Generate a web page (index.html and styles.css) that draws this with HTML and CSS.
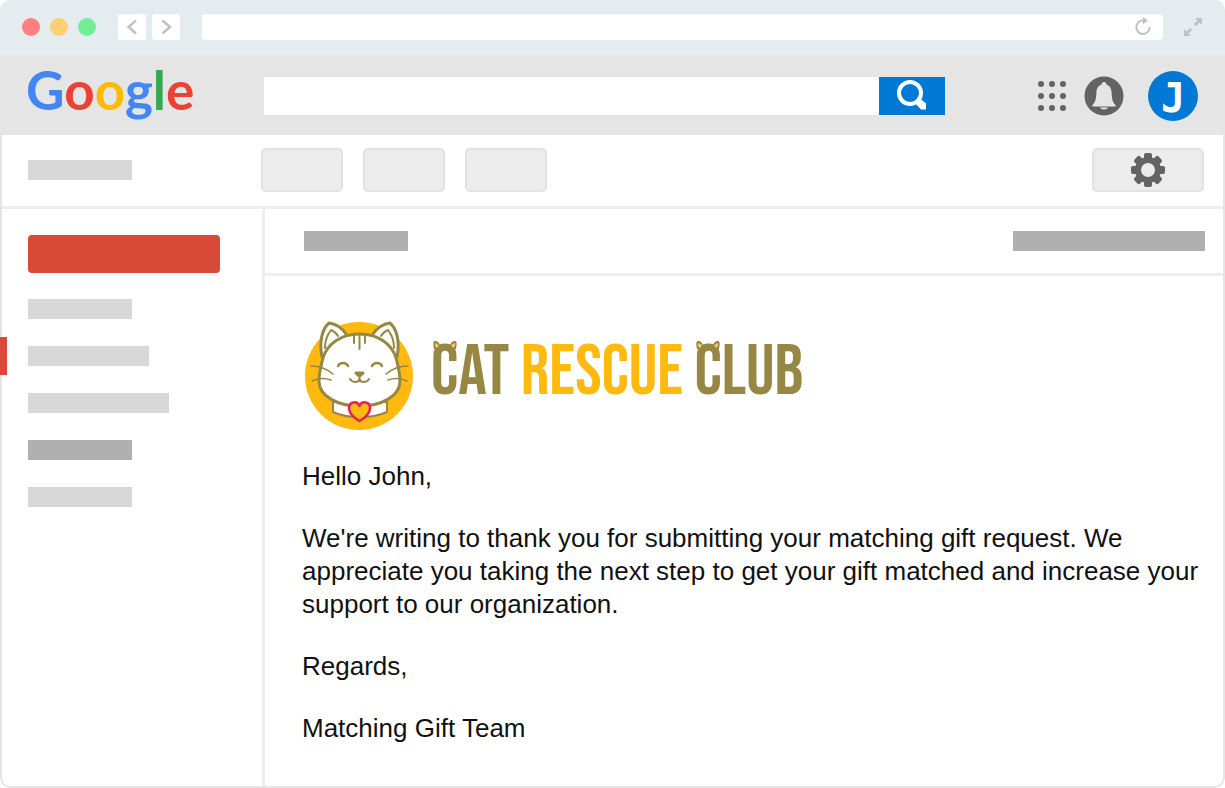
FILE: index.html
```html
<!DOCTYPE html>
<html lang="en">
<head>
  <meta charset="UTF-8">
  <meta name="viewport" content="width=device-width, initial-scale=1">
  <title>Cat Rescue Club</title>
  <link rel="stylesheet" href="styles.css">
</head>
<body>
  <div class="browser">
    <div class="browser-bar">
      <div class="dots">
        <span class="dot red"></span>
        <span class="dot yellow"></span>
        <span class="dot green"></span>
      </div>
      <div class="history">
        <button type="button" aria-label="Back">
          <svg width="28" height="28" viewBox="0 0 28 28"><path d="M18 7.500L10.500 14l7.500 6.500"/></svg>
        </button>
        <button type="button" aria-label="Forward">
          <svg width="28" height="28" viewBox="0 0 28 28"><path d="M10.500 7.500L18 14l-7.500 6.500"/></svg>
        </button>
      </div>
      <div class="address">
        <input type="text" aria-label="Address">
        <button type="button" aria-label="Reload">
          <svg width="20" height="20" viewBox="0 0 20 20"><path d="M10.500 3.600A6.700 6.700 0 1 0 16.700 10" fill="none" stroke="#bcc3c6" stroke-width="2"/><path d="M10 0l5 3.500-5 4z" fill="#bcc3c6"/></svg>
        </button>
      </div>
      <button type="button" class="expand" aria-label="Full screen">
        <svg width="20" height="20" viewBox="0 0 20 20"><path d="M12 1h7v7l-2.500-2.500-3.800 3.800-2-2 3.800-3.800zM8 19H1v-7l2.500 2.500 3.800-3.800 2 2-3.800 3.800z" fill="#bcc3c6"/></svg>
      </button>
    </div>

    <header class="header">
      <a href="#" class="google"><span class="b">G</span><span class="r">o</span><span class="y">o</span><span class="b">g</span><span class="g">l</span><span class="r">e</span></a>
      <form class="search">
        <input type="search" aria-label="Search">
        <button type="submit" aria-label="Search">
          <svg width="32" height="32" viewBox="0 0 32 32"><circle cx="14" cy="13" r="11" fill="none" stroke="#fff" stroke-width="4"/><path d="M19 23l4.500-5 6.500 5.500v6h-5z" fill="#fff"/></svg>
        </button>
      </form>
      <div class="account">
        <button type="button" class="apps" aria-label="Apps">
          <svg width="30" height="34" viewBox="0 0 30 34" fill="#636363">
            <circle cx="4" cy="5" r="3"/><circle cx="15" cy="5" r="3"/><circle cx="26" cy="5" r="3"/>
            <circle cx="4" cy="17" r="3"/><circle cx="15" cy="17" r="3"/><circle cx="26" cy="17" r="3"/>
            <circle cx="4" cy="29" r="3"/><circle cx="15" cy="29" r="3"/><circle cx="26" cy="29" r="3"/>
          </svg>
        </button>
        <button type="button" class="bell" aria-label="Notifications">
          <svg width="40" height="40" viewBox="0 0 40 40"><circle cx="20" cy="20" r="19.500" fill="#636363"/><path d="M20 6c1.500 0 2.400 1.200 2.400 2.500 3.600 1.200 5 4.200 5.200 8 .2 6 .8 9.500 3.900 12.500v1.500h-23V29c3.100-3 3.700-6.500 3.900-12.500.2-3.800 1.600-6.800 5.200-8C17.600 7.200 18.500 6 20 6zM16 31.500h8c-.8 2.600-7.200 2.600-8 0z" fill="#e5e5e5"/></svg>
        </button>
        <button type="button" class="avatar">J</button>
      </div>
    </header>

    <div class="mailbox">
      <div class="toolbar">
        <span class="bar short"></span>
        <div class="actions">
          <button type="button" aria-label="Archive"></button>
          <button type="button" aria-label="Delete"></button>
          <button type="button" aria-label="Move"></button>
        </div>
        <button type="button" class="settings" aria-label="Settings">
          <svg width="36" height="36" viewBox="0 0 36 36">
            <g fill="#636363">
              <rect x="14" y="1" width="8" height="34" rx="2"/>
              <rect x="14" y="1" width="8" height="34" rx="2" transform="rotate(45 18 18)"/>
              <rect x="14" y="1" width="8" height="34" rx="2" transform="rotate(90 18 18)"/>
              <rect x="14" y="1" width="8" height="34" rx="2" transform="rotate(135 18 18)"/>
              <circle cx="18" cy="18" r="13"/>
            </g>
            <circle cx="18" cy="18" r="7" fill="#ececec"/>
          </svg>
        </button>
      </div>

      <div class="columns">
        <nav class="sidebar">
          <button type="button" class="compose" aria-label="Compose"></button>
          <ul>
            <li><span class="bar short"></span></li>
            <li class="current"><span class="bar medium"></span></li>
            <li><span class="bar long"></span></li>
            <li><span class="bar short dark"></span></li>
            <li><span class="bar short"></span></li>
          </ul>
        </nav>

        <main class="message">
          <div class="message-top">
            <span class="bar short dark"></span>
            <span class="bar wide dark"></span>
          </div>
          <div class="message-body">
            <div class="club">
              <svg width="110" height="112" viewBox="0 0 110 112" fill="none" stroke="#978744" stroke-width="2" stroke-linecap="round" stroke-linejoin="round">
                <circle cx="54" cy="57" r="54" fill="#ffb90f" stroke="none"/>
                <!-- collar -->
                <path d="M28 83v10c15 7 38 7 54 0V83z" fill="#fff"/>
                <!-- ears -->
                <path d="M17 38C14 23 17 10 24 4c7 1 13 5 17 11M92 38C95 23 92 10 85 4c-7 1-13 5-17 11" fill="#fff" stroke-width="3"/>
                <path d="M20 29c0-8 2-13 6-18 3 1 5 3 7 6M89 29c0-8-2-13-6-18-3 1-5 3-7 6"/>
                <!-- head -->
                <path d="M54.500 15C36 15 22 25 18 39c-2 8-4 14-4 23 0 15 18 25 40.500 25S95 77 95 62c0-9-2-15-4-23C87 25 73 15 54.500 15z" fill="#fff" stroke-width="3"/>
                <path d="M49 16v8M54.500 16v14M60 16v8"/>
                <path d="M33 47c2-4 8-4 10 0M67 47c2-4 8-4 10 0" stroke-width="2.500"/>
                <path d="M51 54h7l-3.500 3z" fill="#978744" stroke-width="3"/>
                <path d="M54.500 58v2c-1 4-7 4-9.500 0M54.500 60c1 4 7 4 9.500 0"/>
                <path d="M6 47c8 0 16 3 22 8M7 62c6-3 13-3 19-1M103 47c-8 0-16 3-22 8M102 62c-6-3-13-3-19-1" stroke-width="1.500"/>
                <path d="M54.500 102c-7-4-10.500-8-10.500-13 0-6 8-8 10.500-2C57 81 65 83 65 89c0 5-3.500 9-10.500 13z" fill="#ffb90f" stroke="#e5205c" stroke-width="2.500"/>
              </svg>
              <h1><span class="eared">C<svg class="ears" width="24" height="9" viewBox="0 0 24 9"><path d="M1 9C0 4 0 1 2 1c3 0 4 2 5 4h10c1-2 2-4 5-4 2 0 2 3 1 8z" fill="#978744"/><path d="M2 6V3l4 2-2 3zM22 6V3l-4 2 2 3z" fill="#ffc95a"/></svg></span>AT <span class="gold">RESCUE</span> <span class="eared">C<svg class="ears" width="24" height="9" viewBox="0 0 24 9"><path d="M1 9C0 4 0 1 2 1c3 0 4 2 5 4h10c1-2 2-4 5-4 2 0 2 3 1 8z" fill="#978744"/><path d="M2 6V3l4 2-2 3zM22 6V3l-4 2 2 3z" fill="#ffc95a"/></svg></span>LUB</h1>
            </div>
            <p>Hello John,</p>
            <p>We're writing to thank you for submitting your matching gift request. We appreciate you taking the next step to get your gift matched and increase your support to our organization.</p>
            <p>Regards,</p>
            <p>Matching Gift Team</p>
          </div>
        </main>
      </div>
    </div>
  </div>
</body>
</html>
```

FILE: styles.css
```css
* {
  box-sizing: border-box;
}

body {
  margin: 0;
  font-family: "Liberation Sans", Arial, sans-serif;
  color: #111;
  background: #fff;
}

button {
  display: flex;
  align-items: center;
  justify-content: center;
  padding: 0;
  border: none;
  background: none;
  cursor: pointer;
}

input {
  border: none;
  outline: none;
  background: #fff;
}

.browser {
  display: flex;
  flex-direction: column;
  min-height: 100vh;
  border-radius: 10px;
  overflow: hidden;
}

/* window bar */
.browser-bar {
  display: flex;
  align-items: center;
  height: 55px;
  padding: 0 22px 1px;
  background: #e4ecf0;
}

.dots {
  display: flex;
  gap: 10px;
}

.dot {
  width: 18px;
  height: 18px;
  border-radius: 50%;
}

.dot.red {
  background: #ff8080;
}

.dot.yellow {
  background: #ffd070;
}

.dot.green {
  background: #73ee94;
}

.history {
  display: flex;
  gap: 6px;
  margin: 0 22px;
}

.history button {
  width: 28px;
  height: 26px;
  border-radius: 3px;
  background: #fff;
}

.history path {
  fill: none;
  stroke: #bcc3c6;
  stroke-width: 2.5;
}

.address {
  display: flex;
  flex: 1;
  padding-right: 10px;
  border-radius: 4px;
  background: #fff;
}

.address input {
  flex: 1;
  height: 26px;
  min-width: 0;
  border-radius: 4px;
}

.expand {
  margin-left: 20px;
}

/* google header */
.header {
  display: flex;
  align-items: center;
  height: 80px;
  padding: 2px 27px 0 26px;
  background: #e5e5e5;
}

.google {
  width: 238px;
  padding-bottom: 12px;
  font-family: "Product Sans", "Google Sans", Lato, sans-serif;
  font-size: 53px;
  font-weight: bold;
  line-height: 66px;
  text-decoration: none;
}

.google .b {
  color: #4285f4;
}

.google .r {
  color: #ea4335;
}

.google .y {
  color: #fbbc05;
}

.google .g {
  color: #34a853;
}

.search {
  display: flex;
  flex: 1;
  height: 38px;
}

.search input {
  flex: 1;
  min-width: 0;
  padding: 0 10px;
  font-size: 18px;
}

.search button {
  width: 66px;
  background: #0078d4;
}

.account {
  display: flex;
  align-items: center;
  margin-left: 92px;
}

.bell {
  margin: 0 24px 0 17px;
}

.avatar {
  width: 50px;
  height: 50px;
  padding-top: 4px;
  border-radius: 50%;
  background: #0078d4;
  color: #fff;
  font-family: "DejaVu Sans Mono", monospace;
  font-size: 40px;
  font-weight: bold;
}

/* mailbox */
.mailbox {
  display: flex;
  flex: 1;
  flex-direction: column;
  border: 2px solid #e5e5e5;
  border-top: none;
  border-radius: 0 0 10px 10px;
}

.bar {
  display: block;
  height: 20px;
  background: #d8d8d8;
}

.bar.dark {
  background: #b0b0b0;
}

.bar.short {
  width: 104px;
}

.bar.medium {
  width: 121px;
}

.bar.long {
  width: 141px;
}

.bar.wide {
  width: 192px;
}

.toolbar {
  display: flex;
  align-items: center;
  height: 74px;
  padding: 0 19px 2px 26px;
  border-bottom: 3px solid #eee;
}

.actions {
  display: flex;
  flex: 1;
  gap: 20px;
  margin-left: 129px;
}

.toolbar button {
  width: 82px;
  height: 44px;
  border: 2px solid #e2e2e2;
  border-radius: 5px;
  background: #ececec;
}

.toolbar .settings {
  width: 112px;
}

.columns {
  display: flex;
  flex: 1;
}

.sidebar {
  width: 263px;
  padding: 26px;
  border-right: 3px solid #eee;
}

.compose {
  width: 192px;
  height: 38px;
  border-radius: 4px;
  background: #d84937;
}

.sidebar ul {
  display: flex;
  flex-direction: column;
  gap: 27px;
  margin: 26px 0 0;
  padding: 0;
  list-style: none;
}

.sidebar li {
  position: relative;
}

/* red marker over the window edge */
.sidebar .current::before {
  content: "";
  position: absolute;
  top: -9px;
  left: -28px;
  width: 7px;
  height: 38px;
  background: #d84937;
}

.message {
  flex: 1;
  min-width: 0;
}

.message-top {
  display: flex;
  align-items: center;
  justify-content: space-between;
  height: 67px;
  padding: 0 18px 0 39px;
  border-bottom: 3px solid #eee;
}

.message-body {
  padding: 43px 16px 0 37px;
  font-size: 26px;
  line-height: 33px;
}

.message-body p {
  margin: 29px 0;
}

.club {
  display: flex;
  align-items: center;
  gap: 16px;
  height: 112px;
  padding-left: 3px;
}

.club h1 {
  margin: 0;
  padding-bottom: 4px;
  color: #978744;
  font-family: "Bebas Neue", "Liberation Sans Narrow", "Liberation Sans", sans-serif;
  font-size: 71px;
  font-weight: normal;
  line-height: 98px;
  white-space: nowrap;
}

.club .gold {
  color: #ffb90f;
}

.eared {
  position: relative;
}

.ears {
  position: absolute;
  top: 10px;
  left: 2px;
}
```
